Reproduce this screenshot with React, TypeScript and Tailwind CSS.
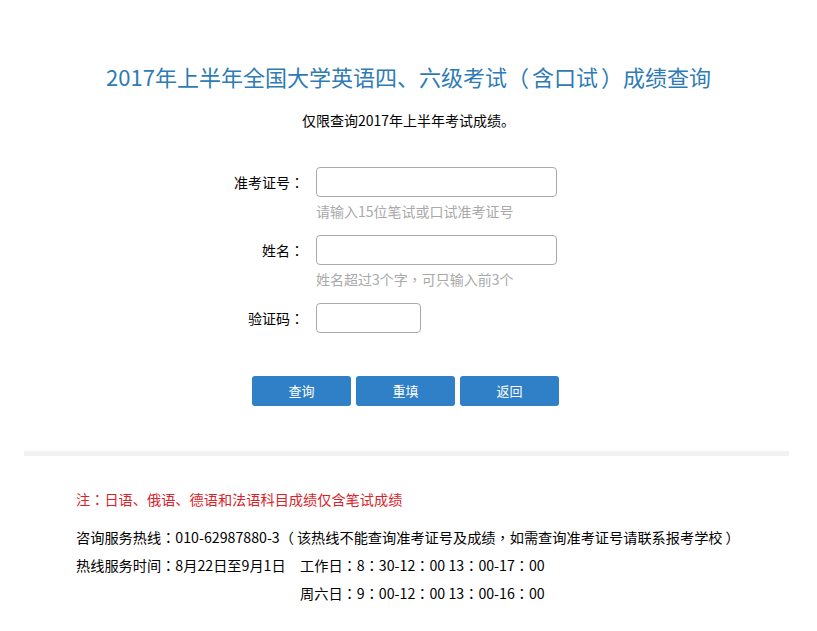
const PUNCT = /([：，（）])/;

// Microsoft YaHei style: full-width punctuation sits in the middle of its box
function T({ children }: { children: string }) {
  return (
    <>
      {children.split(PUNCT).map((part, i) => {
        if (part === "（") return <span key={i} className="pr-[3px]">{part}</span>;
        if (part === "）") return <span key={i} className="pl-[3px]">{part}</span>;
        if (PUNCT.test(part))
          return (
            <span key={i} className="font-['Noto_Sans_CJK_TC',sans-serif]">
              {part}
            </span>
          );
        return part;
      })}
    </>
  );
}

export default function App() {
  return (
    <div className="min-h-[631px] bg-white pt-[60px] font-['Noto_Sans_CJK_SC','Noto_Sans',sans-serif] text-[14px] text-black">
      <h1 className="text-center text-[22px] leading-[32px] text-[#2e7bb5]">
        <T>2017年上半年全国大学英语四、六级考试（含口试）成绩查询</T>
      </h1>
      <p className="mt-[18px] text-center leading-[20px]">仅限查询2017年上半年考试成绩。</p>

      <div className="mt-[37px] flex flex-col gap-[4px]">
        <FormRow label="准考证号：" hint="请输入15位笔试或口试准考证号" width="w-[241px]" />
        <FormRow label="姓名：" hint="姓名超过3个字，可只输入前3个" width="w-[241px]" />
        <FormRow label="验证码：" width="w-[105px]" />
      </div>

      <div className="mt-[43px] flex justify-center gap-[5px] pr-[6px]">
        {["查询", "重填", "返回"].map((t) => (
          <button
            key={t}
            type="button"
            className="h-[30px] w-[99px] rounded-[3px] bg-[#2f80c6] text-[13px] text-white"
          >
            {t}
          </button>
        ))}
      </div>

      <div className="ml-[24px] mt-[45px] h-[5px] w-[765px] bg-[#f2f2f2]" />

      <div className="pl-[76px] pt-[33px] text-[14.2px] leading-[20px]">
        <p className="text-[#d9232a]">
          <T>注：日语、俄语、德语和法语科目成绩仅含笔试成绩</T>
        </p>
        <p className="mt-[18px]">
          <T>咨询服务热线：010-62987880-3（该热线不能查询准考证号及成绩，如需查询准考证号请联系报考学校）</T>
        </p>
        <div className="mt-[8px] flex">
          <span className="w-[224px]">
            <T>热线服务时间：8月22日至9月1日</T>
          </span>
          <div className="flex flex-col gap-[8px]">
            <span>
              <T>工作日：8：30-12：00 13：00-17：00</T>
            </span>
            <span>
              <T>周六日：9：00-12：00 13：00-16：00</T>
            </span>
          </div>
        </div>
      </div>
    </div>
  );
}

function FormRow({ label, hint, width }: { label: string; hint?: string; width: string }) {
  return (
    <div className="flex">
      <div className="w-[304px] pt-[5px] text-right leading-[20px]">
        <T>{label}</T>
      </div>
      <div className="ml-[12px] flex flex-col">
        <input
          type="text"
          className={`h-[30px] ${width} rounded-[4px] border border-[#a9a9a9] bg-white outline-none`}
        />
        {hint && (
          <div className="h-[34px] pt-[4px] leading-[20px] text-[#a9a9a9]">
            <T>{hint}</T>
          </div>
        )}
      </div>
    </div>
  );
}
